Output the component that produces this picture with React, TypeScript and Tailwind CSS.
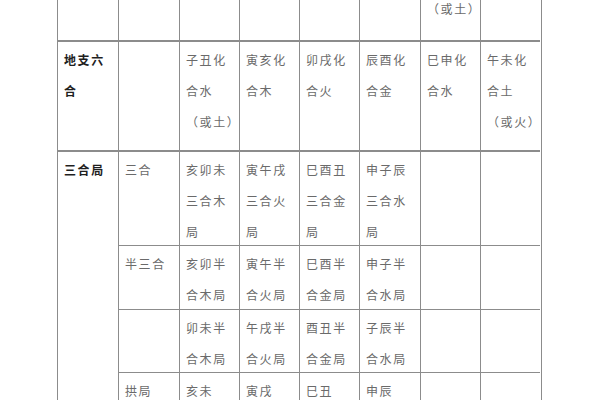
import React from "react";

const F = { fontFamily: '"Noto Sans CJK SC", "Noto Sans", sans-serif' };

function Cell({ lines = [], bold = false, className = "" }: { lines?: string[]; bold?: boolean; className?: string }) {
  return (
    <div className={`border-l border-t border-[#8c8c8c] pl-[6px] pt-[2px] ${className}`}>
      {lines.map((l, i) => (
        <div
          key={i}
          className={`leading-[31px] text-[12px] tracking-[1.6px] whitespace-nowrap ${bold ? "font-bold text-[#1f1f1f]" : "text-[#6a6a6a]"}`}
        >
          {l}
        </div>
      ))}
    </div>
  );
}

export default function App() {
  return (
    <div className="w-[600px] h-[400px] overflow-hidden bg-white" style={F}>
      <div className="ml-[57px] w-[485px] grid grid-cols-[61px_61px_60px_60px_60px_61px_60px_60px] grid-rows-[40px_110px_95px_64px_63px_64px] border-r border-[#8c8c8c]">
        {/* top partial row */}
        <div className="border-l border-[#8c8c8c]" />
        <div className="border-l border-[#8c8c8c]" />
        <div className="border-l border-[#8c8c8c]" />
        <div className="border-l border-[#8c8c8c]" />
        <div className="border-l border-[#8c8c8c]" />
        <div className="border-l border-[#8c8c8c]" />
        <div className="border-l border-[#8c8c8c] pl-[6px]">
          <div className="leading-[18px] text-[12px] tracking-[1.6px] text-[#6a6a6a] whitespace-nowrap">（或土）</div>
        </div>
        <div className="border-l border-[#8c8c8c]" />

        {/* 地支六合 */}
        <Cell bold lines={["地支六", "合"]} className="border-t-2" />
        <Cell className="border-t-2" />
        <Cell lines={["子丑化", "合水", "（或土）"]} className="border-t-2" />
        <Cell lines={["寅亥化", "合木"]} className="border-t-2" />
        <Cell lines={["卯戌化", "合火"]} className="border-t-2" />
        <Cell lines={["辰酉化", "合金"]} className="border-t-2" />
        <Cell lines={["巳申化", "合水"]} className="border-t-2" />
        <Cell lines={["午未化", "合土", "（或火）"]} className="border-t-2" />

        {/* 三合局 */}
        <Cell bold lines={["三合局"]} className="row-span-4 border-t-2" />
        <Cell lines={["三合"]} className="border-t-2" />
        <Cell lines={["亥卯未", "三合木", "局"]} className="border-t-2" />
        <Cell lines={["寅午戌", "三合火", "局"]} className="border-t-2" />
        <Cell lines={["巳酉丑", "三合金", "局"]} className="border-t-2" />
        <Cell lines={["申子辰", "三合水", "局"]} className="border-t-2" />
        <Cell className="border-t-2" />
        <Cell className="border-t-2" />

        <Cell lines={["半三合"]} />
        <Cell lines={["亥卯半", "合木局"]} />
        <Cell lines={["寅午半", "合火局"]} />
        <Cell lines={["巳酉半", "合金局"]} />
        <Cell lines={["申子半", "合水局"]} />
        <Cell />
        <Cell />

        <Cell />
        <Cell lines={["卯未半", "合木局"]} />
        <Cell lines={["午戌半", "合火局"]} />
        <Cell lines={["酉丑半", "合金局"]} />
        <Cell lines={["子辰半", "合水局"]} />
        <Cell />
        <Cell />

        <Cell lines={["拱局"]} />
        <Cell lines={["亥未"]} />
        <Cell lines={["寅戌"]} />
        <Cell lines={["巳丑"]} />
        <Cell lines={["申辰"]} />
        <Cell />
        <Cell />
      </div>
    </div>
  );
}
